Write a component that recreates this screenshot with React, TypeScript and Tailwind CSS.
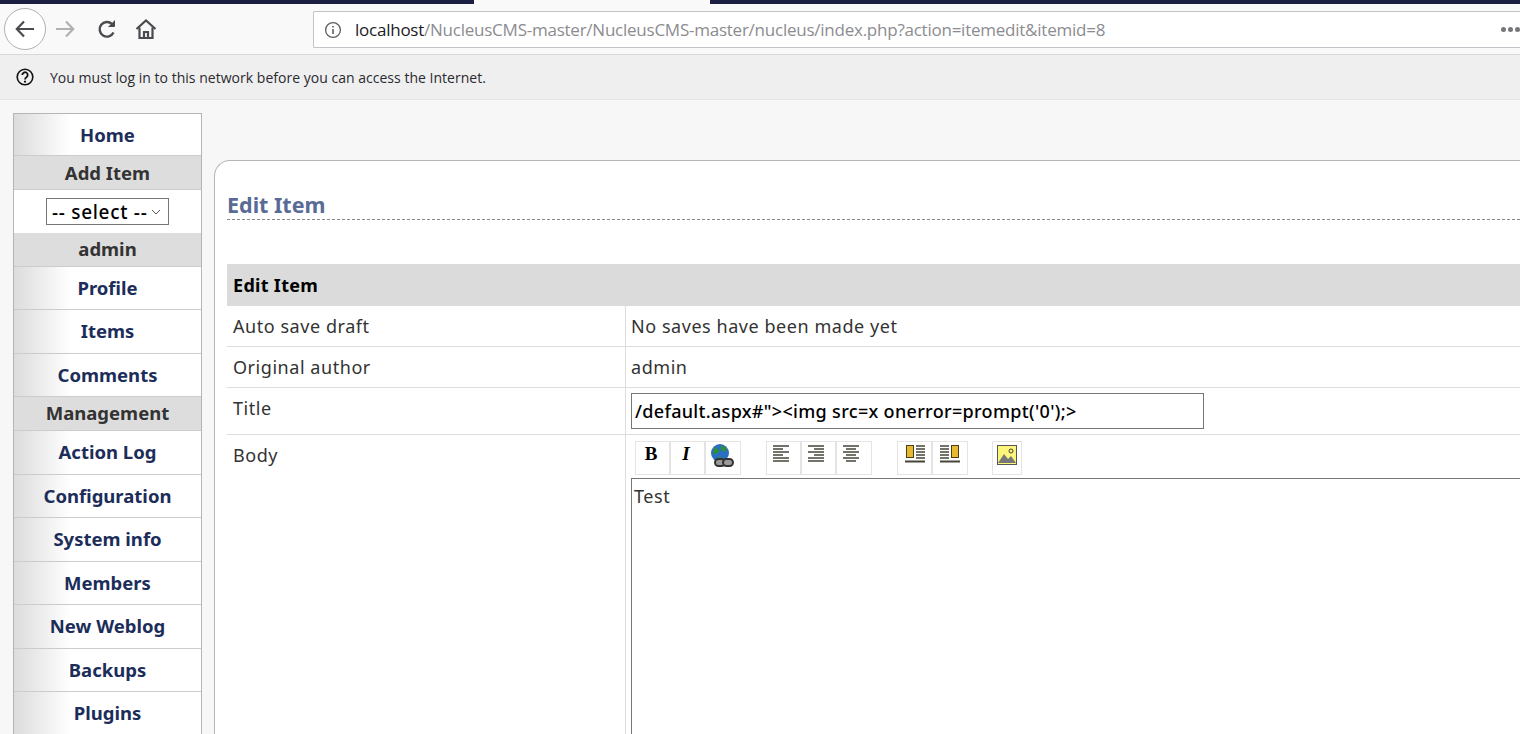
import React from "react";

const ui = "font-['Open_Sans','Noto_Sans',sans-serif]";
const page = "font-['Noto_Sans','Open_Sans',sans-serif]";

function TabStrip() {
  return (
    <div className="flex h-[4px] bg-[#f9f9fa]">
      <div className="w-[474px] bg-[#1d1f42]" />
      <div className="w-[236px] bg-[#f9f9fa]" />
      <div className="flex-1 bg-[#1d1f42]" />
    </div>
  );
}

function NavBar() {
  return (
    <div className="flex h-[51px] items-start border-b border-[#d8d8da] bg-[#f9f9fa]">
      <div className="ml-[4px] mt-[4px] flex h-[42px] w-[42px] items-center justify-center rounded-full border border-[#b1b1b3] bg-white">
        <svg width="22" height="22" viewBox="0 0 22 22" fill="none" stroke="#4a4a4f" strokeWidth="2.2">
          <path d="M20 11H3M10 3.500 2.800 11l7.200 7.500" />
        </svg>
      </div>
      <svg className="ml-[9px] mt-[14px]" width="22" height="22" viewBox="0 0 22 22" fill="none" stroke="#b1b1b3" strokeWidth="2.2">
        <path d="M1 11h17M11 3.500 18.200 11 11 18.500" />
      </svg>
      <svg className="ml-[19px] mt-[14px]" width="22" height="22" viewBox="0 0 22 22" fill="none" stroke="#4a4a4f" strokeWidth="2.4">
        <path d="M17.500 14.500A7.300 7.300 0 1 1 16 6" />
        <path d="M18.500 2.500v6h-6" fill="#4a4a4f" strokeWidth="1" />
      </svg>
      <svg className="ml-[17px] mt-[14px]" width="22" height="22" viewBox="0 0 22 22" fill="none" stroke="#4a4a4f" strokeWidth="2.2">
        <path d="M1.500 11 11 2.500l9.500 8.500" />
        <path d="M4.500 9.500V20h13V9.500" />
        <path d="M9 20v-6h4v6" />
      </svg>
      <div className={`ml-[156px] mt-[7px] flex h-[37px] flex-1 items-center rounded-l-[2px] border border-r-0 border-[#c4c1c9] bg-white pl-[10px] text-[17px] ${ui}`}>
        <svg width="18" height="18" viewBox="0 0 18 18" fill="none" stroke="#5f5f63" strokeWidth="1.3">
          <circle cx="9" cy="9" r="7.400" />
          <path d="M9 8v5M9 5v1.600" strokeWidth="1.600" />
        </svg>
        <span className="ml-[13px] whitespace-nowrap tracking-[-0.24px] text-[#8c8c90]">
          <span className="text-[#1b1b1f]">localhost</span>/NucleusCMS-master/NucleusCMS-master/nucleus/index.php?action=itemedit&amp;itemid=8
        </span>
        <div className="ml-auto flex gap-[2px]">
          <span className="h-[5px] w-[5px] rounded-full bg-[#77777b]" />
          <span className="h-[5px] w-[5px] rounded-full bg-[#77777b]" />
          <span className="h-[5px] w-[5px] rounded-full bg-[#77777b]" />
        </div>
      </div>
    </div>
  );
}

function NoticeBar() {
  return (
    <div className={`flex h-[45px] items-center border-b border-[#e6e6e7] bg-[#efeff0] pl-[16px] text-[14px] text-[#2a2a2e] ${ui}`}>
      <svg width="18" height="18" viewBox="0 0 18 18" fill="none" stroke="#111" strokeWidth="1.6">
        <circle cx="9" cy="9" r="7.800" />
        <path d="M6.300 7a2.700 2.700 0 1 1 4.200 2.200C9.500 9.900 9 10.400 9 11.500" strokeWidth="1.800" />
        <path d="M9 12.700v1.800" strokeWidth="2" />
      </svg>
      <span className="ml-[16px] tracking-[0.02px]">You must log in to this network before you can access the Internet.</span>
    </div>
  );
}

function MenuLink({ label, h = "h-[43.500px]" }: { label: string; h?: string }) {
  return (
    <div className={`flex ${h} items-center justify-center border-b border-[#cccccc] bg-gradient-to-r from-[#dcdcdc] via-white via-[30%] to-white text-[18.500px] font-bold text-[#1c2d5a]`}>
      {label}
    </div>
  );
}

function MenuHead({ label, h = "h-[34px]" }: { label: string; h?: string }) {
  return (
    <div className={`flex ${h} items-center justify-center border-b border-[#cccccc] bg-[#dddddd] text-[18.500px] font-bold text-[#333333]`}>
      {label}
    </div>
  );
}

function Sidebar() {
  return (
    <div className="ml-[13px] mt-[13px] w-[189px] shrink-0 border border-b-0 border-[#b5b5b5] bg-white">
      <MenuLink label="Home" h="h-[42px] pt-[1px]" />
      <MenuHead label="Add Item" h="h-[34px] pt-[1px]" />
      <div className="flex h-[43px] items-center justify-center bg-white">
        <div className="flex h-[27px] w-[123px] items-center border border-[#767676] pl-[5px] pt-[1px] text-[19px] font-medium leading-none tracking-[0.7px] text-black">
          -- select --
          <svg className="ml-[4px]" width="10" height="6" viewBox="0 0 10 6" fill="none" stroke="#555" strokeWidth="1">
            <path d="m1 1 4 4 4-4" />
          </svg>
        </div>
      </div>
      <MenuHead label="admin" h="h-[33.500px]" />
      <MenuLink label="Profile" />
      <MenuLink label="Items" />
      <MenuLink label="Comments" />
      <MenuHead label="Management" h="h-[34px] pb-[2px]" />
      <MenuLink label="Action Log" />
      <MenuLink label="Configuration" />
      <MenuLink label="System info" />
      <MenuLink label="Members" />
      <MenuLink label="New Weblog" />
      <MenuLink label="Backups" />
      <MenuLink label="Plugins" />
    </div>
  );
}

function ToolBtn({ children, w = "w-[35px]" }: { children: React.ReactNode; w?: string }) {
  return (
    <div className={`flex h-[34px] ${w} items-start justify-center border border-[#e4e4e4] pt-[1px]`}>
      {children}
    </div>
  );
}

function AlignIcon({ d }: { d: string }) {
  return (
    <svg className="-ml-[6px]" width="18" height="20" viewBox="0 0 18 20" fill="none" stroke="#45453a" strokeWidth="1.600">
      <path d={d} />
    </svg>
  );
}

function FloatIcon({ right }: { right?: boolean }) {
  return (
    <svg width="22" height="22" viewBox="0 0 22 22">
      <rect x={right ? 12.500 : 2.500} y="2.500" width="7" height="12" fill="#e8b830" stroke="#4a3f18" />
      <path d={right ? "M1 3h9M1 6h9M1 9h9M1 12h9M1 15h9" : "M12 3h9M12 6h9M12 9h9M12 12h9M12 15h9"} stroke="#45453a" strokeWidth="1.500" />
      <path d="M1 18.500h20" stroke="#45453a" strokeWidth="2" />
    </svg>
  );
}

function Toolbar() {
  return (
    <div className="flex h-[34px] items-start pl-[4px]">
      <ToolBtn>
        <span className="-ml-[3px] font-['Liberation_Serif',serif] text-[19px] font-bold leading-[22px] text-black">B</span>
      </ToolBtn>
      <ToolBtn>
        <span className="-ml-[3px] font-['Liberation_Serif',serif] text-[19px] font-bold italic leading-[22px] text-black">I</span>
      </ToolBtn>
      <ToolBtn w="w-[36px]">
        <svg className="-ml-[2px]" width="24" height="26" viewBox="0 0 24 26">
          <circle cx="10" cy="10" r="9" fill="#2b6fc4" />
          <path d="M4 4c3 1 6 3 5 5s-5 1-6 3M11 2c3 1 5 2 6 6-2 1-5 0-6-1zM9 13c2 0 3 2 2 5-2-1-3-3-2-5" fill="#2f8f3a" />
          <rect x="5" y="16" width="10" height="7" rx="3.500" fill="#999" stroke="#333" strokeWidth="2" />
          <rect x="13" y="16" width="10" height="7" rx="3.500" fill="#999" stroke="#333" strokeWidth="2" />
        </svg>
      </ToolBtn>
      <div className="w-[25px]" />
      <ToolBtn>
        <AlignIcon d="M1 3h16M1 6h10M1 9h16M1 12h10M1 15h16M1 18h16" />
      </ToolBtn>
      <ToolBtn>
        <AlignIcon d="M1 3h16M7 6h10M1 9h16M7 12h10M1 15h16M1 18h16" />
      </ToolBtn>
      <ToolBtn w="w-[36px]">
        <AlignIcon d="M1 3h16M4 6h10M1 9h16M4 12h10M1 15h16M4 18h10" />
      </ToolBtn>
      <div className="w-[25px]" />
      <ToolBtn>
        <FloatIcon />
      </ToolBtn>
      <ToolBtn w="w-[36px]">
        <FloatIcon right />
      </ToolBtn>
      <div className="w-[24px]" />
      <ToolBtn w="w-[30px]">
        <svg className="mt-[2px]" width="20" height="20" viewBox="0 0 20 20">
          <rect x="0.500" y="0.500" width="19" height="19" fill="#fdf57a" stroke="#555" />
          <circle cx="14" cy="6" r="2" fill="#fdf57a" stroke="#444" />
          <path d="M1 18 7 9l4 5 3-3 5 7z" fill="#77777a" />
        </svg>
      </ToolBtn>
    </div>
  );
}

function Row({ label, value, h }: { label: string; value: React.ReactNode; h: string }) {
  return (
    <div className={`flex ${h} border-b border-[#dddddd]`}>
      <div className="w-[399px] shrink-0 border-r border-[#dddddd] pl-[6px] pt-[8px] tracking-[0.55px] text-[#333333]">{label}</div>
      <div className="flex-1 pl-[5px] pt-[8px] tracking-[0.55px] text-[#333333]">{value}</div>
    </div>
  );
}

function EditTable() {
  return (
    <div className="ml-[12px] mt-[44px] text-[18px] leading-[24px]">
      <div className="flex h-[42px] items-center bg-[#dbdbdb] pl-[6px] font-bold tracking-[0.3px] text-black">Edit Item</div>
      <Row label="Auto save draft" value="No saves have been made yet" h="h-[41px]" />
      <Row label="Original author" value="admin" h="h-[41px]" />
      <div className="flex h-[47px] border-b border-[#dddddd]">
        <div className="w-[399px] shrink-0 border-r border-[#dddddd] pl-[6px] pt-[8px] tracking-[0.55px] text-[#333333]">Title</div>
        <div className="flex-1 pl-[5px] pt-[5px]">
          <div className="flex h-[36px] w-[573px] items-center border border-[#767676] pl-[3px] font-medium tracking-[0.32px] text-black">
            /default.aspx#"&gt;&lt;img src=x onerror=prompt('0');&gt;
          </div>
        </div>
      </div>
      <div className="flex h-[400px]">
        <div className="w-[399px] shrink-0 border-r border-[#dddddd] pl-[6px] pt-[8px] tracking-[0.55px] text-[#333333]">Body</div>
        <div className="flex-1 pl-[5px] pt-[6px]">
          <Toolbar />
          <div className="mt-[3px] h-[300px] border border-r-0 border-[#767676] pl-[2px] pt-[5px] tracking-[0.55px] text-[#333333]">Test</div>
        </div>
      </div>
    </div>
  );
}

export default function App() {
  return (
    <div className="h-[734px] w-[1520px] overflow-hidden bg-[#f7f7f7]">
      <TabStrip />
      <NavBar />
      <NoticeBar />
      <div className={`flex ${page}`}>
        <Sidebar />
        <div className="ml-[12px] mt-[60px] h-[700px] flex-1 rounded-tl-[16px] border-l border-t border-[#b5b5b5] bg-white">
          <div className="ml-[12px] mt-[31px] h-[28px] border-b border-dashed border-[#888888] text-[21.500px] font-bold leading-[26px] text-[#596a96]">
            Edit Item
          </div>
          <EditTable />
        </div>
      </div>
    </div>
  );
}
